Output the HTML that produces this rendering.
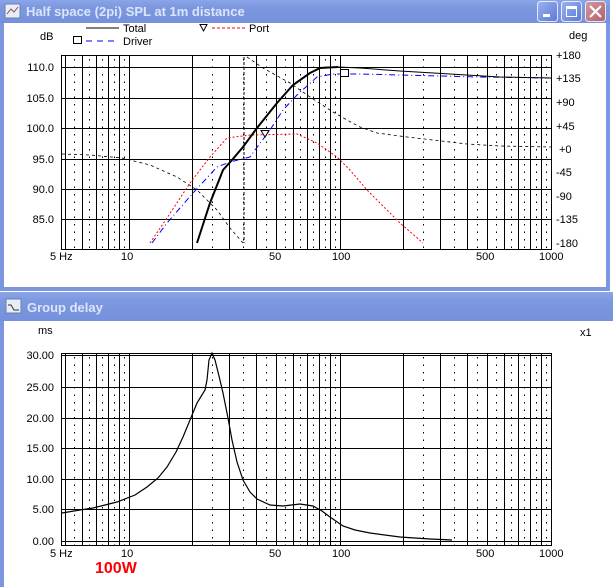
<!DOCTYPE html>
<html><head><style>
html,body{margin:0;padding:0;width:613px;height:587px;overflow:hidden;background:#fff;font-family:"Liberation Sans",sans-serif}
svg{display:block}
</style></head><body>
<svg id="s" width="613" height="587" xmlns="http://www.w3.org/2000/svg" font-family="Liberation Sans, sans-serif" font-size="11">
<defs>
<linearGradient id="tb" x1="0" y1="0" x2="0" y2="1">
<stop offset="0" stop-color="#8aa6e8"/><stop offset="0.3" stop-color="#7d98df"/><stop offset="1" stop-color="#7591dc"/>
</linearGradient>
<linearGradient id="bb" x1="0" y1="0" x2="1" y2="1">
<stop offset="0" stop-color="#9bb3f0"/><stop offset="1" stop-color="#5b78d6"/>
</linearGradient>
<linearGradient id="br" x1="0" y1="0" x2="1" y2="1">
<stop offset="0" stop-color="#d49a9e"/><stop offset="1" stop-color="#b0606a"/>
</linearGradient>
</defs>
<rect width="613" height="587" fill="#fff"/>
<rect x="0" y="0" width="610" height="291" fill="#7b96de"/>
<rect x="0" y="0" width="610" height="23" fill="url(#tb)"/>
<rect x="4" y="23" width="602" height="264" fill="#fff"/>
<rect x="5" y="4" width="15" height="14" fill="#e8eef8" stroke="#6a7fb0"/>
<polyline points="7,14 11,9 14,12 18,7" fill="none" stroke="#a04060"/>
<text x="26" y="16" font-size="13" font-weight="bold" fill="#dce6fa">Half space (2pi) SPL at 1m distance</text>
<g id="btn1"></g>
<rect x="0" y="292" width="613" height="295" fill="#7b96de"/>
<rect x="0" y="292" width="613" height="29" fill="url(#tb)"/>
<rect x="4" y="321" width="609" height="266" fill="#fff"/>
<rect x="6" y="299" width="15" height="14" fill="#e8eef8" stroke="#6a7fb0"/>
<polyline points="8,305 11,305 14,310 19,310" fill="none" stroke="#333"/>
<text x="27" y="312" font-size="13" font-weight="bold" fill="#dce6fa">Group delay</text>

<text x="40" y="40">dB</text>
<text x="569" y="39">deg</text>
<line x1="86" y1="28" x2="119" y2="28" stroke="#000"/>
<text x="123" y="32">Total</text>
<rect x="73.5" y="36.5" width="8" height="7" fill="none" stroke="#000"/>
<line x1="86" y1="41" x2="119" y2="41" stroke="#00f" stroke-dasharray="6,5"/>
<text x="123" y="45">Driver</text>
<polygon points="200,24.5 207,24.5 203.5,31" fill="none" stroke="#000"/>
<line x1="212" y1="28" x2="245" y2="28" stroke="#f00" stroke-dasharray="3,2"/>
<text x="249" y="32">Port</text>
<g text-anchor="end">
<text x="54" y="71">110.0</text><text x="54" y="102">105.0</text><text x="54" y="132">100.0</text>
<text x="54" y="163">95.0</text><text x="54" y="193">90.0</text><text x="54" y="223">85.0</text>
</g>
<g>
<text x="556" y="59">+180</text><text x="556" y="82">+135</text><text x="556" y="106">+90</text>
<text x="556" y="130">+45</text><text x="559" y="153">+0</text><text x="556" y="176">-45</text>
<text x="556" y="200">-90</text><text x="556" y="223">-135</text><text x="556" y="247">-180</text>
</g>
<g id="xl1"></g>
<text x="38" y="334">ms</text>
<text x="580" y="336">x1</text>
<g text-anchor="end">
<text x="54" y="359">30.00</text><text x="54" y="391">25.00</text><text x="54" y="422">20.00</text>
<text x="54" y="452">15.00</text><text x="54" y="483">10.00</text><text x="54" y="513">5.00</text><text x="54" y="545">0.00</text>
</g>
<g id="xl2"></g>
<text x="95" y="573" font-size="16" font-weight="bold" fill="#f00">100W</text>
<g id="g1"></g><g id="g2"></g>

<polyline fill="none" stroke="#000" stroke-width="0.8" stroke-dasharray="3,3" points="62,154 90,155 122,158 150,165 177,177 197,190 217,210 230,228 243,243"/>
<polyline fill="none" stroke="#000" stroke-width="0.8" stroke-dasharray="3,3" points="247,57 263,68 290,83 310,97 333,112 347,120 360,127 377,133 407,137 433,140 467,144 500,146 551,147"/>
<line x1="244" y1="57" x2="244" y2="243" stroke="#000" stroke-dasharray="3,2"/>
<polyline fill="none" stroke="#f00" stroke-dasharray="2,2" points="150,243 167,218 190,183 210,157 227,138 250,135 297,134 317,143 337,157 350,170 367,190 400,223 423,243"/>
<polyline fill="none" stroke="#00f" stroke-dasharray="6,3,1,3" points="152,243 167,223 193,193 217,167 230,162 250,157 255,150 270,130 283,110 297,95 317,77 333,74 360,74 400,75 480,77 551,78"/>
<polyline fill="none" stroke="#000" stroke-width="2" points="197,243 210,203 223,170 232,160 243,147 257,128 277,103 293,85 310,73 320,68 338,67"/>
<polyline fill="none" stroke="#000" stroke-width="1" points="338,67 360,68 400,71 450,74 500,77 551,78"/>
<rect x="340.5" y="69.5" width="8" height="7" fill="#fff" stroke="#000"/>
<polygon points="261,130.5 269,130.5 265,137" fill="#fff" stroke="#000"/>

<polyline fill="none" stroke="#000" stroke-width="1.2" points="62,513 80,510 93,508 117,502 135,495 147,487 158,478 167,467 176,452 183,437 190,420 197,403 205,390 207,380 209,360 212,353 215,360 219,376 223,393 228,418 232,440 237,462 243,480 250,492 257,499 270,505 283,506 300,504 313,506 322,511 330,517 343,526 355,530 370,533 400,537 430,539 452,540"/>
</svg>
<script>
(function(){
var NS="http://www.w3.org/2000/svg";
function el(p,t,a){var e=document.createElementNS(NS,t);for(var k in a)e.setAttribute(k,a[k]);p.appendChild(e);return e;}
function X(f){return 65+211*Math.log10(f/5);}
function grid(g,top,bot,hs,hd){
  var L=61,R=551;
  el(g,"rect",{x:L+.5,y:top+.5,width:R-L,height:bot-top,fill:"none",stroke:"#000"});
  hs.forEach(function(y){el(g,"line",{x1:L,x2:R,y1:y+.5,y2:y+.5,stroke:"#000"});});
  [1,10,100].forEach(function(d){
    for(var n=1;n<=10;n++){
      if(d==1&&n<5)continue; if(d>1&&n==1)continue;
      var x=Math.round(X(n*d))+.5;
      if(x<=R) el(g,"line",{x1:x,x2:x,y1:top,y2:bot,stroke:"#000"});
      if(n<10){var xd=Math.round(X((n+.5)*d))+.5; if(xd<R) el(g,"line",{x1:xd,x2:xd,y1:top+4,y2:bot,stroke:"#000","stroke-dasharray":"1.5,6"});}
    }
  });
}
grid(document.getElementById("g1"),55,249,[67,98,128,159,189,219],[]);
grid(document.getElementById("g2"),353,545,[355,387,418,448,479,509,541],[]);
function xl(id,y){var g=document.getElementById(id);
  [["5 Hz",50],["10",121],["50",269],["100",332],["500",476],["1000",539]].forEach(function(a){var t=el(g,"text",{x:a[1],y:y});t.textContent=a[0];});}
xl("xl1",260);xl("xl2",557);
var b=document.getElementById("btn1");
function btns(y,xs){
  xs.forEach(function(x,i){
    el(b,"rect",{x:x+.5,y:y+.5,width:20,height:20,rx:3,fill:i==2?"url(#br)":"url(#bb)",stroke:"#fff","stroke-opacity":"0.8"});
    if(i==0) el(b,"rect",{x:x+6,y:y+13,width:7,height:3,fill:"#fff"});
    if(i==1){el(b,"rect",{x:x+5.5,y:y+5.5,width:10,height:10,fill:"none",stroke:"#fff"});el(b,"rect",{x:x+5,y:y+5,width:11,height:3,fill:"#fff"});}
    if(i==2){el(b,"path",{d:"M"+(x+5)+" "+(y+5)+" L"+(x+16)+" "+(y+16)+" M"+(x+16)+" "+(y+5)+" L"+(x+5)+" "+(y+16),stroke:"#fff","stroke-width":"2.2"});}
  });
}
btns(1,[537,561,585]);
btns(296,[538,562,586]);
})();
</script>
</body></html>
